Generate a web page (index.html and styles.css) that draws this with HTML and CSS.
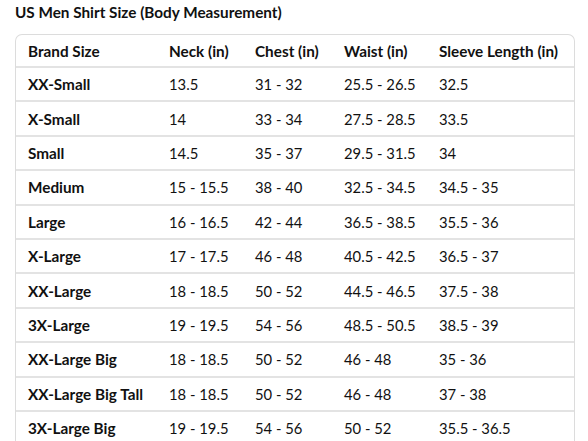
FILE: index.html
```html
<!DOCTYPE html>
<html>
<head>
<meta charset="utf-8">
<link rel="stylesheet" href="styles.css">
</head>
<body>
<div class="page">
  <h1 class="title">US Men Shirt Size (Body Measurement)</h1>
  <div class="table">
    <div class="row head">
      <div>Brand Size</div><div>Neck (in)</div><div>Chest (in)</div><div>Waist (in)</div><div>Sleeve Length (in)</div>
    </div>
    <div class="row"><div class="b">XX-Small</div><div>13.5</div><div>31 - 32</div><div>25.5 - 26.5</div><div>32.5</div></div>
    <div class="row"><div class="b">X-Small</div><div>14</div><div>33 - 34</div><div>27.5 - 28.5</div><div>33.5</div></div>
    <div class="row"><div class="b">Small</div><div>14.5</div><div>35 - 37</div><div>29.5 - 31.5</div><div>34</div></div>
    <div class="row"><div class="b">Medium</div><div>15 - 15.5</div><div>38 - 40</div><div>32.5 - 34.5</div><div>34.5 - 35</div></div>
    <div class="row"><div class="b">Large</div><div>16 - 16.5</div><div>42 - 44</div><div>36.5 - 38.5</div><div>35.5 - 36</div></div>
    <div class="row"><div class="b">X-Large</div><div>17 - 17.5</div><div>46 - 48</div><div>40.5 - 42.5</div><div>36.5 - 37</div></div>
    <div class="row"><div class="b">XX-Large</div><div>18 - 18.5</div><div>50 - 52</div><div>44.5 - 46.5</div><div>37.5 - 38</div></div>
    <div class="row"><div class="b">3X-Large</div><div>19 - 19.5</div><div>54 - 56</div><div>48.5 - 50.5</div><div>38.5 - 39</div></div>
    <div class="row"><div class="b">XX-Large Big</div><div>18 - 18.5</div><div>50 - 52</div><div>46 - 48</div><div>35 - 36</div></div>
    <div class="row"><div class="b">XX-Large Big Tall</div><div>18 - 18.5</div><div>50 - 52</div><div>46 - 48</div><div>37 - 38</div></div>
    <div class="row"><div class="b">3X-Large Big</div><div>19 - 19.5</div><div>54 - 56</div><div>50 - 52</div><div>35.5 - 36.5</div></div>
  </div>
</div>
</body>
</html>
```
FILE: styles.css
```css
html, body {
  margin: 0;
  padding: 0;
  background: #fff;
}
body {
  font-family: "Lato", "Liberation Sans", sans-serif;
  color: #111;
  font-size: 14.8px;
}
.page {
  padding: 0 13px 0 15px;
}
.title {
  margin: 0;
  padding-top: 3px;
  font-size: 15.3px;
  font-weight: 700;
  line-height: 18px;
  height: 31px;
}
.table {
  border: 1px solid #dcdcdc;
  border-radius: 7px 7px 0 0;
  border-bottom: none;
}
.row {
  display: grid;
  grid-template-columns: 141px 86px 89px 95px 1fr;
  align-items: center;
  height: 34.4px;
  box-sizing: border-box;
  border-bottom: 2px solid #e3e3e3;
  padding-left: 12px;
  white-space: nowrap;
}
.row.head {
  height: 33px;
  font-weight: 700;
  font-size: 15.3px;
}
.b {
  font-weight: 700;
  font-size: 15.3px;
}
```
